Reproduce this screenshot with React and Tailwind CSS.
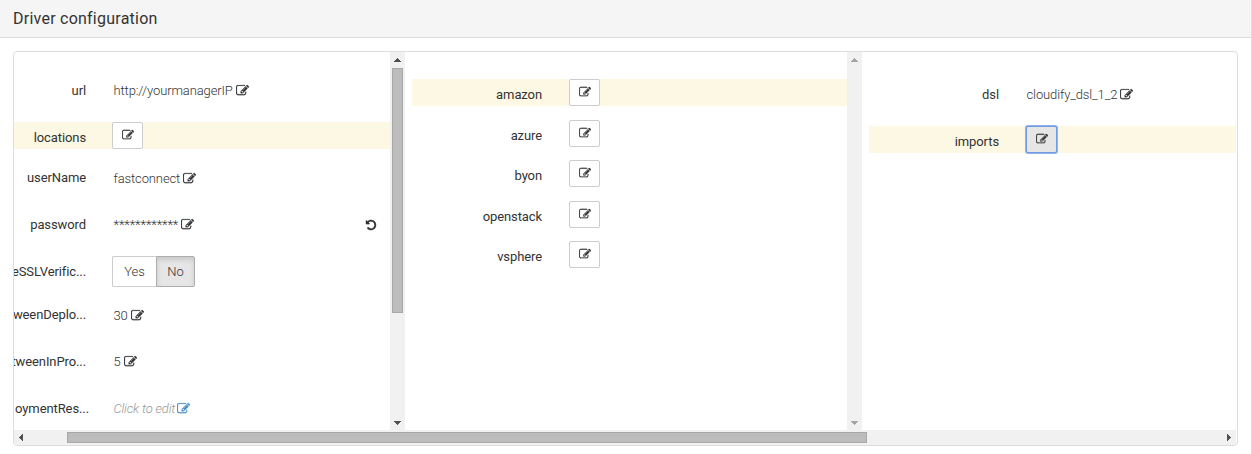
const EDIT_PATH =
  'M888 1184l116-116-152-152-116 116v56h96v96h56zm440-720q-16-16-33 1l-350 350q-17 17-1 33t33-1l350-350q17-17 1-33zm80 594v190q0 119-84.5 203.5t-203.5 84.5h-832q-119 0-203.5-84.5t-84.5-203.5v-832q0-119 84.5-203.5t203.5-84.5h832q63 0 117 25 15 7 18 23 3 17-9 29l-49 49q-14 14-32 8-23-6-45-6h-832q-66 0-113 47t-47 113v832q0 66 47 113t113 47h832q66 0 113-47t47-113v-126q0-13 9-22l64-64q15-15 35-7t20 29zm-96-738l288 288-672 672h-288v-288zm444 132l-92 92-288-288 92-92q28-28 68-28t68 28l152 152q28 28 28 68t-28 68z';
const UNDO_PATH =
  'M1664 896q0 156-61 298t-164 245-245 164-298 61q-172 0-327-72.5t-264-204.5q-7-10-6.5-22.5t8.5-20.5l137-138q10-9 25-9 16 2 23 12 73 95 179 147t225 52q104 0 198.5-40.5t163.5-109.5 109.5-163.5 40.5-198.5-40.5-198.5-109.5-163.5-163.5-109.5-198.5-40.5q-98 0-188 35.5t-160 101.5l137 138q31 30 14 69-17 40-59 40h-448q-26 0-45-19t-19-45v-448q0-42 40-59 39-17 69 14l130 129q107-101 244.5-156.5t284.5-55.5q156 0 298 61t245 164 164 245 61 298z';

function Glyph({ path, className }) {
  return (
    <svg viewBox="0 0 1792 1792" fill="currentColor" stroke="currentColor" strokeWidth="25" className={className}>
      <path d={path} />
    </svg>
  );
}

function EditButton({ active }) {
  return (
    <button
      className={
        active
          ? 'flex h-[27px] w-[31px] shrink-0 items-center justify-center rounded-[2px] border border-[#6f9be0] bg-[#e6e6e6] text-[#333] shadow-[0_0_0_1px_#8fb2ec]'
          : 'flex h-[27px] w-[31px] shrink-0 items-center justify-center rounded-[2px] border border-[#ccc] bg-white text-[#333]'
      }
    >
      <Glyph path={EDIT_PATH} className="mb-px size-[12px]" />
    </button>
  );
}

function Row({ label, className, labelClass = '', children }) {
  return (
    <div className={`flex shrink-0 items-center ${className}`}>
      <div className={`flex shrink-0 justify-end tracking-[-0.1px] whitespace-nowrap ${labelClass}`}>{label}</div>
      {children}
    </div>
  );
}

function Value({ children, empty }) {
  return (
    <div
      className={
        empty
          ? 'ml-[1.5px] flex items-center gap-[2px] font-light tracking-[-0.2px] italic whitespace-nowrap text-[#999]'
          : 'ml-[1.5px] flex items-center gap-[3px] font-light tracking-[-0.12px] whitespace-nowrap text-[#333]'
      }
    >
      <span>{children}</span>
      <Glyph path={EDIT_PATH} className={empty ? 'size-[13px] text-[#428bca]' : 'size-[13px] text-[#333]'} />
    </div>
  );
}

function Arrow({ points, muted }) {
  return (
    <svg viewBox="0 0 15 15" shapeRendering="crispEdges" className={muted ? 'size-[15px] shrink-0 text-[#a3a3a3]' : 'size-[15px] shrink-0 text-[#505050]'}>
      <polygon points={points} fill="currentColor" />
    </svg>
  );
}

function VerticalBar({ muted, thumb }) {
  return (
    <div className="flex w-[15px] shrink-0 flex-col items-center bg-[#f1f1f1]">
      <Arrow points="4,10 11,10 7.5,6" muted={muted} />
      <div className="flex w-full grow justify-center pt-px">
        {thumb && <div className="h-[245px] w-[11px] border border-[#a8a8a8] bg-[#bcbcbc]" />}
      </div>
      <Arrow points="4,6 11,6 7.5,10" muted={muted} />
    </div>
  );
}

const LEFT = 'w-[72px] mr-[26px]';
const MID = 'w-[130px] mr-[27px]';
const RIGHT = 'w-[130px] mr-[27px]';

export default function App() {
  return (
    <div className="flex h-[454px] w-[1252px] flex-col overflow-hidden border-r border-[#ddd] bg-white font-['Roboto',sans-serif] text-[13px] leading-[18px] text-[#333]">
      <header className="flex h-[38px] shrink-0 items-center border-b border-[#ddd] bg-[#f5f5f5] pl-[13px] text-[16px] tracking-[0.24px]">
        Driver configuration
      </header>
      <main className="mt-[13px] ml-[13px] flex h-[395px] w-[1225px] flex-col overflow-hidden rounded-[4px] border border-[#ddd]">
        <div className="flex h-[378px] shrink-0">
          <section className="flex w-[376px] shrink-0 flex-col overflow-hidden">
            <Row label="url" labelClass={LEFT} className="mt-[25px] h-[27px]">
              <Value>http://yourmanagerIP</Value>
            </Row>
            <Row label="locations" labelClass={`${LEFT} pt-[5px]`} className="mt-[18px] h-[27px] bg-[#fcf8e3]">
              <EditButton />
            </Row>
            <Row label="userName" labelClass={`${LEFT} pb-[2px]`} className="mt-[16px] h-[27px]">
              <Value>fastconnect</Value>
            </Row>
            <Row label="password" labelClass={LEFT} className="mt-[19px] h-[27px]">
              <Value>************</Value>
              <Glyph path={UNDO_PATH} className="mt-px mr-[13px] ml-auto size-[12px]" />
            </Row>
            <Row label="eSSLVerific..." labelClass={LEFT} className="mt-[18px] h-[31px]">
              <div className="flex h-[31px] font-light tracking-[-0.1px]">
                <button className="w-[44px] rounded-l-[2px] border border-r-0 border-[#ccc] bg-white">Yes</button>
                <button className="w-[39px] rounded-r-[2px] border border-[#adadad] bg-[#e6e6e6] shadow-[inset_0_3px_5px_rgba(0,0,0,0.125)]">No</button>
              </div>
            </Row>
            <Row label="weenDeplo..." labelClass={`${LEFT} pb-[2px]`} className="mt-[15px] h-[27px]">
              <Value>30</Value>
            </Row>
            <Row label="tweenInPro..." labelClass={LEFT} className="mt-[19px] h-[27px]">
              <Value>5</Value>
            </Row>
            <Row label="oymentRes..." labelClass="w-[75px] mr-[23px]" className="mt-[20px] h-[27px]">
              <Value empty>Click to edit</Value>
            </Row>
          </section>
          <VerticalBar thumb />
          <section className="ml-[7px] flex w-[435px] shrink-0 flex-col">
            <Row label="amazon" labelClass={`${MID} pt-[5px]`} className="mt-[27px] h-[27px] bg-[#fcf8e3]">
              <EditButton />
            </Row>
            <Row label="azure" labelClass={`${MID} pt-[5px]`} className="mt-[14px] h-[27px]">
              <EditButton />
            </Row>
            <Row label="byon" labelClass={`${MID} pt-[5px]`} className="mt-[13px] h-[27px]">
              <EditButton />
            </Row>
            <Row label="openstack" labelClass={`${MID} pt-[5px]`} className="mt-[14px] h-[27px]">
              <EditButton />
            </Row>
            <Row label="vsphere" labelClass={`${MID} pt-[5px]`} className="mt-[13px] h-[27px]">
              <EditButton />
            </Row>
          </section>
          <VerticalBar muted />
          <section className="ml-[7px] flex w-[367px] shrink-0 flex-col">
            <Row label="dsl" labelClass="w-[130px] mr-[26px]" className="mt-[29px] h-[27px]">
              <Value>cloudify_dsl_1_2</Value>
            </Row>
            <Row label="imports" labelClass={`${RIGHT} pt-[5px]`} className="mt-[18px] h-[27px] bg-[#fcf8e3]">
              <EditButton active />
            </Row>
          </section>
        </div>
        <div className="flex h-[15px] w-[1222px] shrink-0 items-center bg-[#f1f1f1]">
          <Arrow points="9,4 9,11 5,7.5" />
          <div className="flex grow items-center">
            <div className="ml-[38px] h-[11px] w-[800px] border border-[#a8a8a8] bg-[#bcbcbc]" />
          </div>
          <Arrow points="6,4 6,11 10,7.5" />
        </div>
      </main>
    </div>
  );
}
